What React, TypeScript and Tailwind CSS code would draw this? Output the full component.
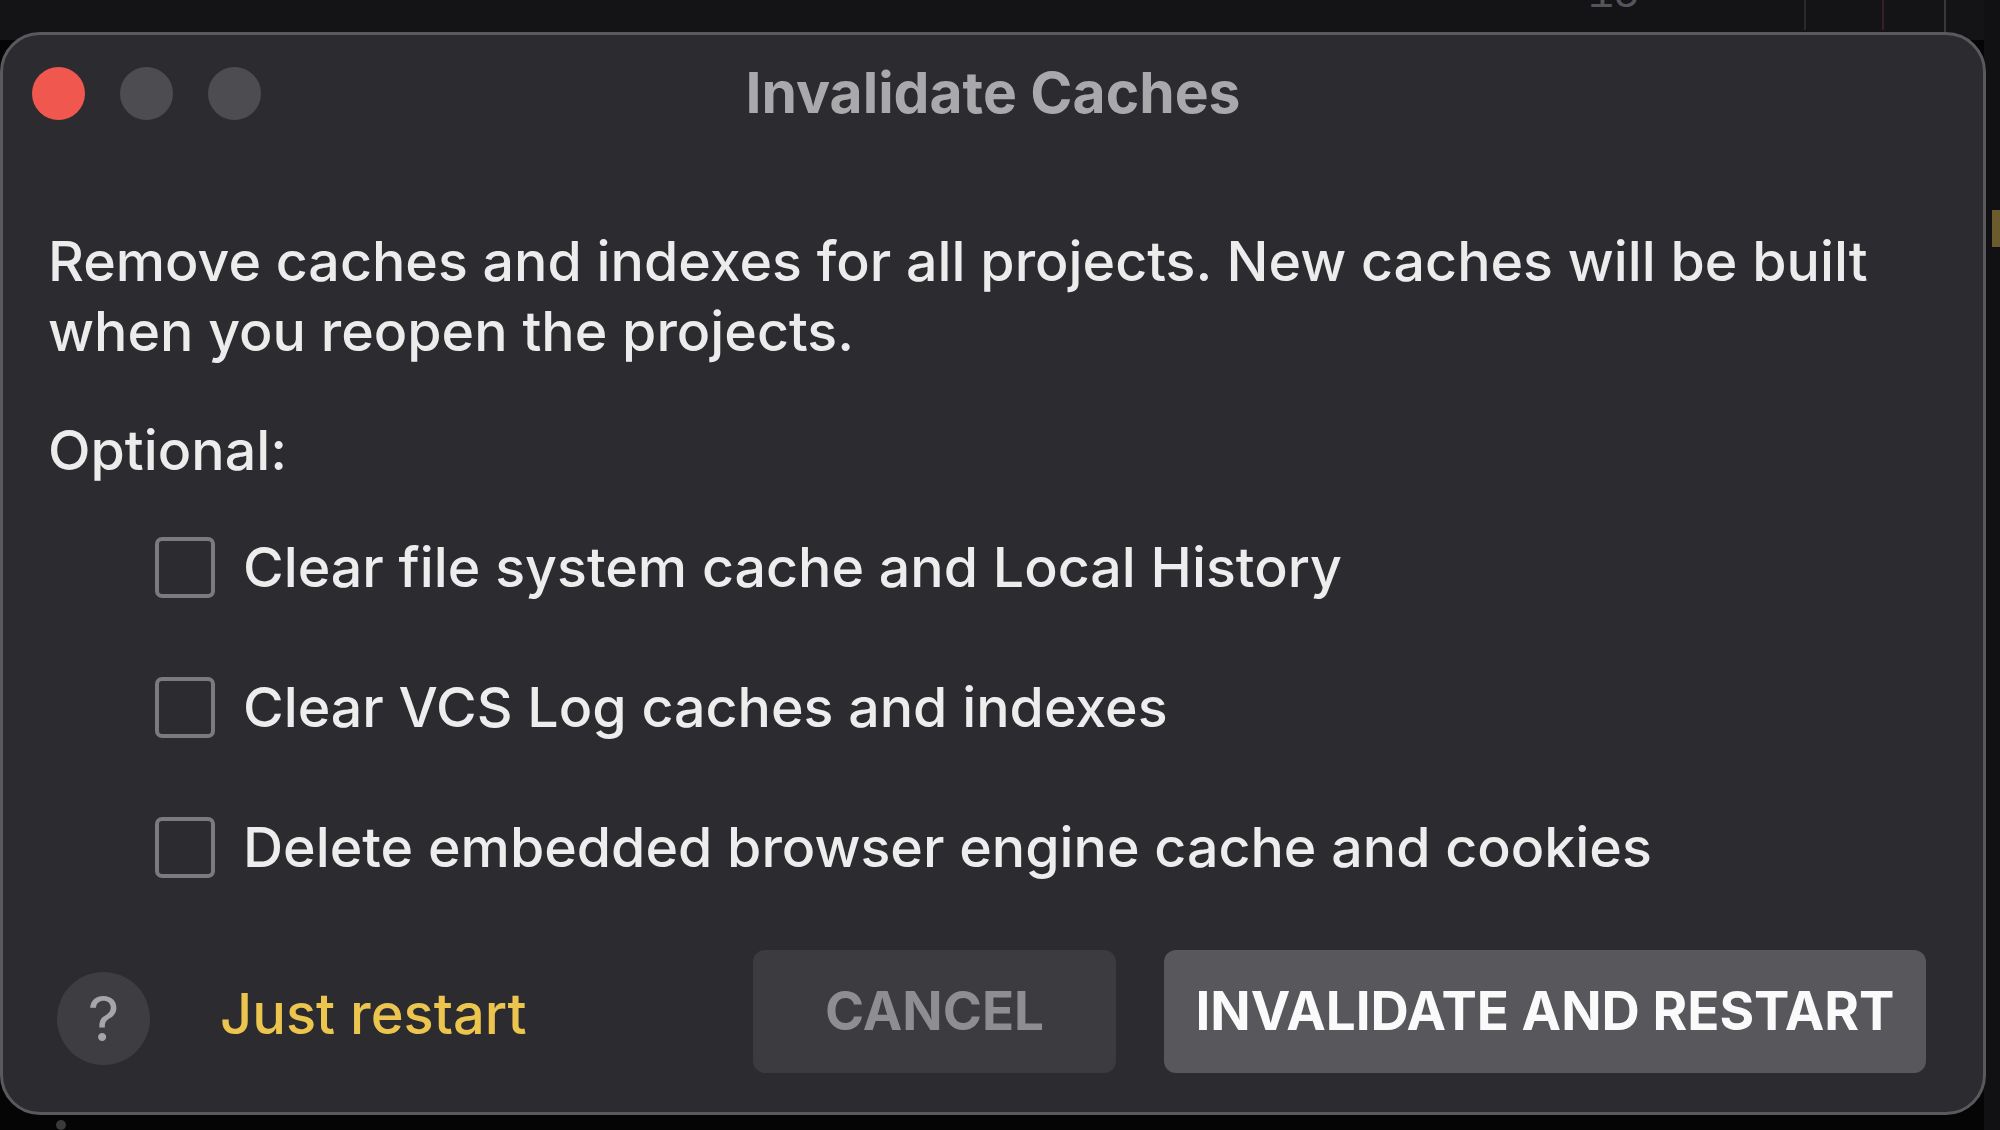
import React from "react";

function TrafficLights() {
  return (
    <div className="flex items-center gap-[35px]">
      <span className="block h-[53px] w-[53px] rounded-full bg-[#f0574f]" />
      <span className="block h-[53px] w-[53px] rounded-full bg-[#4d4c50]" />
      <span className="block h-[53px] w-[53px] rounded-full bg-[#4d4c50]" />
    </div>
  );
}

function CheckRow({ label }: { label: string }) {
  return (
    <label className="flex h-[140px] items-center pl-[107px]">
      <span className="block h-[61px] w-[60px] shrink-0 rounded-[7px] border-[4px] border-[#7b7a7e]" />
      <span className="ml-[28px] text-[55.5px] font-medium leading-[60px] text-[#ededed]">{label}</span>
    </label>
  );
}

export default function App() {
  return (
    <div
      className="relative h-[1130px] w-[2000px] overflow-hidden bg-[#050506]"
      style={{ fontFamily: "Inter, 'Liberation Sans', sans-serif" }}
    >
      {/* editor behind the dialog */}
      <div className="absolute left-0 top-0 h-[40px] w-[2000px] bg-[#141316]" />
      <div className="absolute right-0 top-0 h-[1130px] w-[16px] bg-[#111013]" />
      <span
        className="absolute left-[1588px] top-[-26px] text-[43px] leading-[44px] text-[#555458]"
        style={{ fontFamily: "'Liberation Mono', monospace" }}
      >
        15
      </span>
      <span className="absolute left-[1804px] top-0 h-[30px] w-[2px] bg-[#2a292c]" />
      <span className="absolute left-[1882px] top-0 h-[30px] w-[2px] bg-[#3a1f28]" />
      <span className="absolute left-[1944px] top-0 h-[32px] w-[2px] bg-[#38373a]" />
      <span className="absolute left-[1992px] top-[210px] h-[37px] w-[8px] bg-[#6b5c2e]" />
      <span className="absolute left-[56px] top-[1120px] h-[10px] w-[10px] rounded-full bg-[#3a3a3a]" />

      {/* dialog window */}
      <div className="relative ml-0 mt-[32px] flex h-[1083px] w-[1986px] flex-col rounded-[40px] border-[3px] border-[#5a595d] bg-[#2c2b2f]">
        <div className="relative flex h-[116px] shrink-0 items-center pl-[29px]">
          <TrafficLights />
          <div className="absolute inset-0 flex items-center justify-center">
            <span className="text-[57px] font-bold leading-[60px] text-[#a9a9ac]">Invalidate Caches</span>
          </div>
        </div>

        <div className="px-[45px] pt-[75px]">
          <p className="text-[55.5px] font-medium leading-[70px] text-[#ececec]">
            Remove caches and indexes for all projects. New caches will be built
            <br />
            when you reopen the projects.
          </p>
          <p className="mt-[49px] text-[55.5px] font-medium leading-[70px] text-[#ececec]">Optional:</p>
          <div className="mt-[12px] flex flex-col">
            <CheckRow label="Clear file system cache and Local History" />
            <CheckRow label="Clear VCS Log caches and indexes" />
            <CheckRow label="Delete embedded browser engine cache and cookies" />
          </div>
        </div>

        <div className="mt-[33px] flex h-[123px] items-start pl-[54px] pr-[57px]">
          <div className="mt-[22px] flex h-[93px] w-[93px] items-center justify-center rounded-full bg-[#3e3d41] text-[62px] font-normal leading-none text-[#a6a6a9]">
            ?
          </div>
          <span className="ml-[70px] mt-[34px] text-[56px] font-medium leading-[60px] text-[#ecc54e]">Just restart</span>
          <div className="ml-auto flex gap-[48px]">
            <button className="flex h-[123px] w-[363px] items-center justify-center rounded-[12px] bg-[#3c3b3f] text-[53px] font-bold text-[#8e8d91]">
              CANCEL
            </button>
            <button className="flex h-[123px] w-[762px] items-center justify-center rounded-[12px] bg-[#58575b] text-[53px] font-bold text-[#fafafa]">
              INVALIDATE AND RESTART
            </button>
          </div>
        </div>
      </div>
    </div>
  );
}
